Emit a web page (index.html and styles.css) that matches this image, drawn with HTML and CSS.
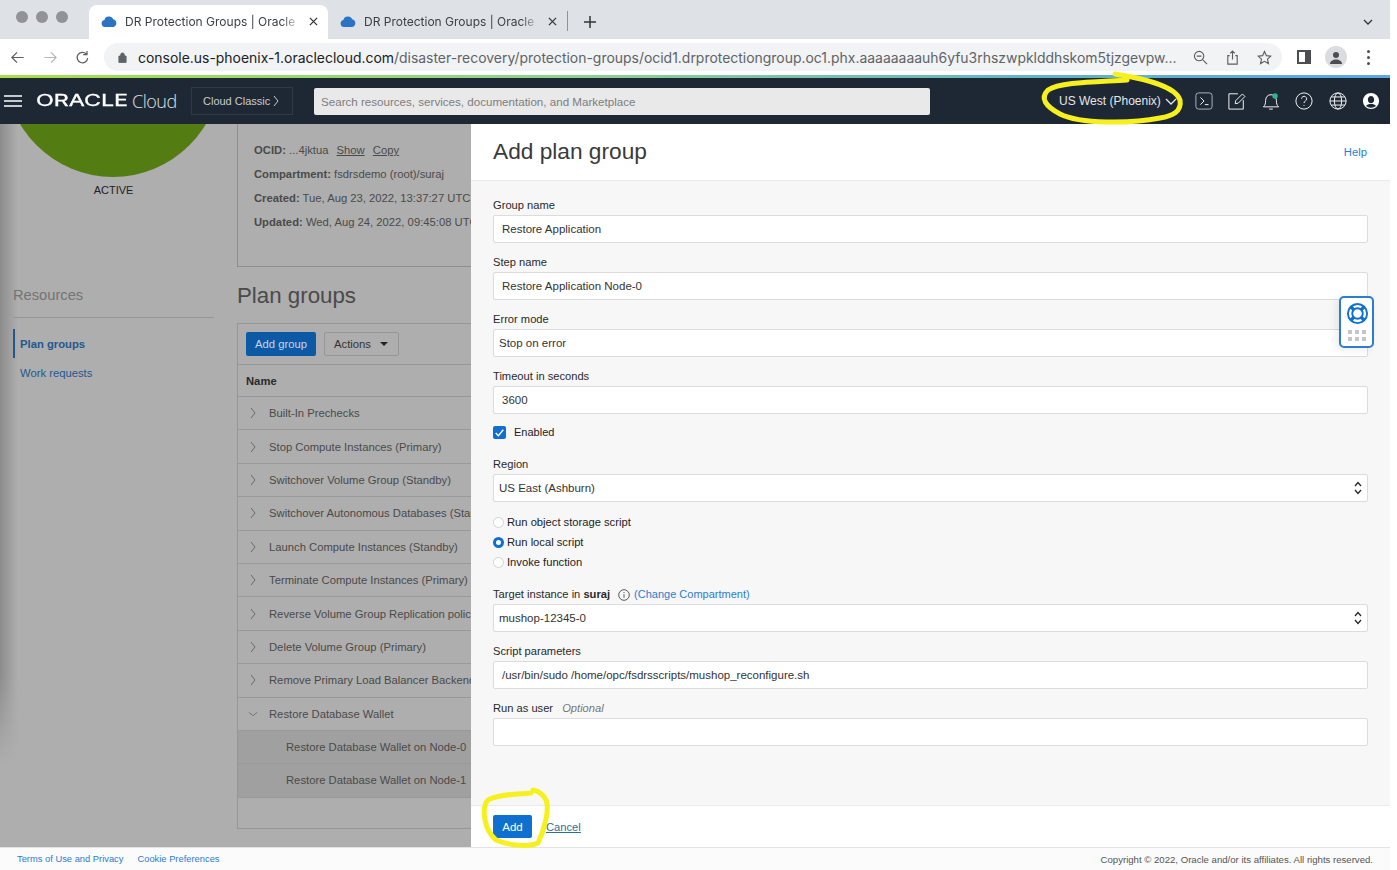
FILE: index.html
```html
<!DOCTYPE html>
<html lang="en">
<head>
    <meta charset="UTF-8">
    <title>DR Protection Groups | Oracle Cloud</title>
    <link rel="stylesheet" href="styles.css">
</head>
<body>
<div class="screen">
    <div class="tabstrip">
        <div class="lights"><i></i><i></i><i></i></div>
        <div class="tab tab_active">
            <svg class="cloud" viewBox="0 0 16 11"><path d="M4 11a3.6 3.6 0 0 1-.6-7.1A4.6 4.6 0 0 1 8.200 .5c1.800 0 3.300 1.100 3.900 2.700A4 4 0 0 1 12.300 11z"/></svg>
            <span class="tab_title">DR Protection Groups | Oracle Cloud</span>
            <svg class="tab_x" viewBox="0 0 10 10"><path d="M1 1l8 8M9 1l-8 8"/></svg>
        </div>
        <div class="tab">
            <svg class="cloud" viewBox="0 0 16 11"><path d="M4 11a3.6 3.6 0 0 1-.6-7.1A4.6 4.6 0 0 1 8.200 .5c1.800 0 3.300 1.100 3.900 2.700A4 4 0 0 1 12.300 11z"/></svg>
            <span class="tab_title">DR Protection Groups | Oracle Cloud</span>
            <svg class="tab_x" viewBox="0 0 10 10"><path d="M1 1l8 8M9 1l-8 8"/></svg>
        </div>
        <div class="tab_sep"></div>
        <svg class="tab_plus" viewBox="0 0 12 12"><path d="M6 0v12M0 6h12"/></svg>
        <svg class="tab_more" viewBox="0 0 10 6"><path d="M1 1l4 4 4-4"/></svg>
    </div>

    <div class="toolbar">
        <svg class="tool_icon" viewBox="0 0 16 16"><path d="M14.500 8H2M7.500 2.500L2 8l5.500 5.500"/></svg>
        <svg class="tool_icon tool_off" viewBox="0 0 16 16"><path d="M1.500 8H14M8.500 2.500L14 8l-5.500 5.500"/></svg>
        <svg class="tool_icon" viewBox="0 0 16 16"><path d="M13.500 8.500A5.600 5.600 0 1 1 12 4.200M12.800 1v4h-4"/></svg>
        <div class="omnibox">
            <svg class="lock" viewBox="0 0 10 12"><path d="M1 5h8v7H1zM3 5V3.500a2 2 0 0 1 4 0V5" /></svg>
            <span class="url"><b>console.us-phoenix-1.oraclecloud.com</b>/disaster-recovery/protection-groups/ocid1.drprotectiongroup.oc1.phx.aaaaaaaauh6yfu3rhszwpklddhskom5tjzgevpw...</span>
            <svg class="omni_icon" viewBox="0 0 16 16"><circle cx="6.500" cy="6.500" r="5"/><path d="M10.500 10.500L15 15M4 6.500h5"/></svg>
            <svg class="omni_icon" viewBox="0 0 16 16"><path d="M5 6H3v9h10V6h-2M8 10V1M5.500 3.500L8 1l2.500 2.500"/></svg>
            <svg class="omni_icon" viewBox="0 0 16 16"><path d="M8 1.500l2 4.500 4.800.5-3.600 3.200 1 4.800L8 12.100l-4.200 2.400 1-4.800L1.200 6.500 6 6z"/></svg>
        </div>
        <svg class="side_icon" viewBox="0 0 14 14"><path d="M0 0h14v14H0zM2 2v10h6V2z" fill-rule="evenodd"/></svg>
        <div class="avatar"><svg viewBox="0 0 14 14"><circle cx="7" cy="4" r="3"/><path d="M1 13c0-3 3-4.500 6-4.500s6 1.500 6 4.500z"/></svg></div>
        <div class="dots"><i></i><i></i><i></i></div>
    </div>
    <div class="brandline"></div>

    <nav class="topnav">
        <svg class="hamburger" viewBox="0 0 18 12"><path d="M0 1h18M0 6h18M0 11h18"/></svg>
        <span class="logo"><span class="logo_mark">ORACLE</span><span class="logo_cloud">Cloud</span></span>
        <div class="classic">Cloud Classic <svg viewBox="0 0 6 12"><path d="M1 1l4 5-4 5"/></svg></div>
        <div class="search">Search resources, services, documentation, and Marketplace</div>
        <div class="region">US West (Phoenix) <svg viewBox="0 0 12 7"><path d="M1 1l5 5 5-5"/></svg></div>
        <div class="nav_icons">
            <svg viewBox="0 0 20 20"><rect x="1" y="1" width="18" height="18" rx="3" stroke="#aab1b9"/><path d="M6 6l4 4-4 4M11 14h4"/></svg>
            <svg viewBox="0 0 20 20"><path d="M17 9v10H1V2h10M8 13l.6-3.400L16 2.200l2.800 2.800-7.400 7.400z"/></svg>
            <svg viewBox="0 0 20 20"><path d="M1.500 16.500c2-2 2.500-3.500 2.500-7 0-4 2.500-6.500 6-6.500s6 2.500 6 6.500c0 3.500.5 5 2.500 7zM8 19h4"/><circle cx="14.500" cy="4.500" r="3" class="bell_dot"/></svg>
            <svg viewBox="0 0 20 20"><circle cx="10" cy="10" r="9"/><path d="M7.300 7.500a2.800 2.800 0 1 1 4.200 2.500c-1 .6-1.500 1.100-1.500 2.300M10 14.500v1"/></svg>
            <svg viewBox="0 0 20 20"><circle cx="10" cy="10" r="9"/><ellipse cx="10" cy="10" rx="4" ry="9"/><path d="M1 10h18M2.300 5.500h15.400M2.300 14.500h15.400"/></svg>
            <svg class="nav_user" viewBox="0 0 20 20"><path fill-rule="evenodd" d="M10 1a9 9 0 1 0 0 18 9 9 0 0 0 0-18zm0 3.500c2 0 3.500 1.700 3.500 4s-1.500 4-3.500 4-3.500-1.700-3.500-4 1.500-4 3.500-4zM4.500 15.500c1-1.500 3-2.200 5.500-2.200s4.500.7 5.500 2.200A7.500 7.500 0 0 1 10 17.500a7.500 7.500 0 0 1-5.500-2z"/></svg>
        </div>
    </nav>

    <main class="workspace">
        <div class="page">
            <aside class="sidebar">
                <div class="status_circle"></div>
                <div class="status_label">ACTIVE</div>
                <h2 class="res_title">Resources</h2>
                <a class="res_link res_current">Plan groups</a>
                <a class="res_link">Work requests</a>
            </aside>
            <section class="content">
                <div class="info_box">
                    <p><b>OCID:</b> ...4jktua <u>Show</u> <u>Copy</u></p>
                    <p><b>Compartment:</b> fsdrsdemo (root)/suraj</p>
                    <p><b>Created:</b> Tue, Aug 23, 2022, 13:37:27 UTC</p>
                    <p><b>Updated:</b> Wed, Aug 24, 2022, 09:45:08 UTC</p>
                </div>
                <h1 class="content_title">Plan groups</h1>
                <div class="table_box">
                    <div class="table_bar">
                        <span class="btn_primary">Add group</span>
                        <span class="btn_actions">Actions <i></i></span>
                    </div>
                    <div class="table_head">Name</div>
                    <div class="row"><svg viewBox="0 0 6 12"><path d="M1 1l4 5-4 5"/></svg>Built-In Prechecks</div>
                    <div class="row"><svg viewBox="0 0 6 12"><path d="M1 1l4 5-4 5"/></svg>Stop Compute Instances (Primary)</div>
                    <div class="row"><svg viewBox="0 0 6 12"><path d="M1 1l4 5-4 5"/></svg>Switchover Volume Group (Standby)</div>
                    <div class="row"><svg viewBox="0 0 6 12"><path d="M1 1l4 5-4 5"/></svg>Switchover Autonomous Databases (Standby)</div>
                    <div class="row"><svg viewBox="0 0 6 12"><path d="M1 1l4 5-4 5"/></svg>Launch Compute Instances (Standby)</div>
                    <div class="row"><svg viewBox="0 0 6 12"><path d="M1 1l4 5-4 5"/></svg>Terminate Compute Instances (Primary)</div>
                    <div class="row"><svg viewBox="0 0 6 12"><path d="M1 1l4 5-4 5"/></svg>Reverse Volume Group Replication policy</div>
                    <div class="row"><svg viewBox="0 0 6 12"><path d="M1 1l4 5-4 5"/></svg>Delete Volume Group (Primary)</div>
                    <div class="row"><svg viewBox="0 0 6 12"><path d="M1 1l4 5-4 5"/></svg>Remove Primary Load Balancer Backend</div>
                    <div class="row"><svg class="row_open" viewBox="0 0 12 6"><path d="M1 1l5 4 5-4"/></svg>Restore Database Wallet</div>
                    <div class="row row_sub">Restore Database Wallet on Node-0</div>
                    <div class="row row_sub">Restore Database Wallet on Node-1</div>
                </div>
            </section>
        </div>

        <section class="panel">
            <header class="panel_head">
                <h1>Add plan group</h1>
                <a class="link">Help</a>
            </header>
            <div class="panel_body">
                <div class="field"><label>Group name</label><div class="input">Restore Application</div></div>
                <div class="field"><label>Step name</label><div class="input">Restore Application Node-0</div></div>
                <div class="field"><label>Error mode</label><div class="input select">Stop on error</div></div>
                <div class="field field_tight"><label>Timeout in seconds</label><div class="input">3600</div></div>
                <div class="check_row">
                    <span class="checkbox"><svg viewBox="0 0 12 12"><path d="M2.500 6.500l2.500 2.500 4.500-5.500"/></svg></span>
                    Enabled
                </div>
                <div class="field field_tight"><label>Region</label>
                    <div class="input select">US East (Ashburn)
                        <svg class="updown" viewBox="0 0 8 14"><path d="M1 5l3-3.500L7 5M1 9l3 3.500L7 9"/></svg>
                    </div>
                </div>
                <div class="radios">
                    <div class="radio_row"><span class="radio"></span>Run object storage script</div>
                    <div class="radio_row"><span class="radio radio_on"></span>Run local script</div>
                    <div class="radio_row"><span class="radio"></span>Invoke function</div>
                </div>
                <div class="field"><label><span>Target instance in <b>suraj</b></span>
                    <svg class="info" viewBox="0 0 12 12"><circle cx="6" cy="6" r="5.300"/><path d="M6 5.200v3.600M6 3v1"/></svg>
                    <a class="link">(Change Compartment)</a></label>
                    <div class="input select">mushop-12345-0
                        <svg class="updown" viewBox="0 0 8 14"><path d="M1 5l3-3.500L7 5M1 9l3 3.500L7 9"/></svg>
                    </div>
                </div>
                <div class="field"><label>Script parameters</label><div class="input">/usr/bin/sudo /home/opc/fsdrsscripts/mushop_reconfigure.sh</div></div>
                <div class="field"><label>Run as user <em>Optional</em></label><div class="input"></div></div>
            </div>
            <footer class="panel_foot">
                <span class="btn_add">Add</span>
                <a class="cancel">Cancel</a>
            </footer>
        </section>
    </main>

    <footer class="legal">
        <a>Terms of Use and Privacy</a>
        <a>Cookie Preferences</a>
        <span class="copyright">Copyright © 2022, Oracle and/or its affiliates. All rights reserved.</span>
    </footer>

    <div class="support">
        <svg viewBox="0 0 24 24"><circle cx="12" cy="12" r="10"/><circle cx="12" cy="12" r="5.500"/><path class="support_bands" d="M5 5l3.500 3.500M19 5l-3.500 3.500M5 19l3.500-3.500M19 19l-3.500-3.500"/></svg>
        <div class="support_grip"><i></i><i></i><i></i><i></i><i></i><i></i></div>
    </div>

    <svg class="scribble" viewBox="0 0 1397 870">
        <path d="M1115 74C1140 78 1175 85 1180 100C1182 112 1172 116 1160 118C1130 124 1080 124 1060 114C1045 106 1040 98 1048 90C1060 82 1095 82 1127 80"/>
        <path d="M531 793C515 794 495 795 488 800C481 808 484 830 496 840C510 846 530 847 538 843C544 830 550 810 546 800C543 794 538 791 533 790"/>
    </svg>
</div>
</body>
</html>
```

FILE: styles.css
```css
* {
    box-sizing: border-box;
}

html, body {
    margin: 0;
    height: 100%;
    background-color: white;
    overflow: hidden;
}

body {
    font-family: "Liberation Sans", Arial, sans-serif;
    font-size: 11.5px;
    color: #222;
}

svg {
    display: block;
    fill: none;
    stroke: currentColor;
}

.screen {
    position: relative;
    width: 1390px;
    height: 870px;
    display: flex;
    flex-direction: column;
}

/* browser chrome */
.tabstrip {
    height: 39px;
    flex: none;
    display: flex;
    align-items: flex-end;
    background-color: #dee1e6;
}

.lights {
    width: 89px;
    height: 39px;
    padding: 11px 0 0 16px;
    display: flex;
    gap: 8px;
}

.lights i {
    width: 12px;
    height: 12px;
    border-radius: 50%;
    background-color: #929396;
}

.tab {
    width: 239px;
    height: 34px;
    padding: 0 10px 2px 12px;
    display: flex;
    align-items: center;
    border-radius: 8px 8px 0 0;
    font-family: Inter, sans-serif;
    font-size: 12px;
    color: #3c4043;
}

.tab_active {
    background-color: white;
}

.cloud {
    width: 16px;
    height: 11px;
    flex: none;
    fill: #2b74c4;
    stroke: none;
}

.tab_title {
    width: 175px;
    margin-left: 8px;
    flex: none;
    white-space: nowrap;
    overflow: hidden;
    -webkit-mask-image: linear-gradient(90deg, black 90%, transparent);
    mask-image: linear-gradient(90deg, black 90%, transparent);
}

.tab_x {
    width: 9px;
    height: 9px;
    margin-left: 9px;
    flex: none;
    stroke: #333;
    stroke-width: 1.400;
}

.tab_sep {
    width: 1px;
    height: 20px;
    margin: 0 0 8px 0;
    background-color: #8f9296;
}

.tab_plus {
    width: 12px;
    height: 12px;
    margin: 0 0 11px 16px;
    stroke: #333;
    stroke-width: 1.500;
}

.tab_more {
    width: 10px;
    height: 6px;
    margin: 0 17px 14px auto;
    stroke: #333;
    stroke-width: 1.300;
}

.toolbar {
    height: 36px;
    flex: none;
    display: flex;
    align-items: center;
    padding-left: 10px;
    background-color: white;
}

.tool_icon {
    width: 15px;
    height: 15px;
    margin-right: 18px;
    stroke: #5a5d61;
    stroke-width: 1.300;
}

.tool_icon:nth-child(3) {
    margin-left: -1px;
}

.tool_off {
    stroke: #b5b8bc;
}

.omnibox {
    width: 1178px;
    height: 28px;
    margin-left: -4px;
    padding-left: 14px;
    display: flex;
    align-items: center;
    border-radius: 14px;
    background-color: #f1f3f4;
}

.lock {
    width: 9px;
    height: 12px;
    margin-right: 11px;
    flex: none;
    fill: #5f6368;
    stroke: #5f6368;
}

.url {
    width: 1054px;
    flex: none;
    font-family: Inter, sans-serif;
    font-size: 13.950px;
    white-space: nowrap;
    overflow: hidden;
    color: #5f6368;
}

.url b {
    font-weight: 400;
    color: #202124;
}

.omni_icon {
    width: 15px;
    height: 15px;
    margin-left: 1px;
    margin-right: 16px;
    flex: none;
    stroke: #5a5d61;
    stroke-width: 1.200;
}

.side_icon {
    width: 14px;
    height: 14px;
    margin-left: 15px;
    fill: #4a4d52;
    stroke: none;
}

.avatar {
    width: 22px;
    height: 22px;
    margin-left: 14px;
    padding: 5px 4px 3px 4px;
    border-radius: 50%;
    background-color: #dadce0;
}

.avatar svg {
    fill: #4a4d52;
    stroke: none;
}

.dots {
    margin-left: 19.500px;
    display: flex;
    flex-direction: column;
    gap: 3px;
}

.dots i {
    width: 3px;
    height: 3px;
    border-radius: 50%;
    background-color: #4a4d52;
}

.brandline {
    height: 3px;
    flex: none;
    background: linear-gradient(90deg, #a8dc4a, #8fd18f 40%, #62b3c8 75%, #5ea6e6);
}

/* oracle nav */
.topnav {
    height: 46px;
    flex: none;
    display: flex;
    align-items: center;
    padding-left: 4px;
    background-color: #1e2835;
    color: #d6d9dc;
}

.hamburger {
    width: 18px;
    height: 12px;
    flex: none;
    stroke: white;
    stroke-width: 1.600;
}

.logo {
    width: 155px;
    margin-left: 14px;
    display: flex;
    align-items: center;
    color: white;
}

.logo_mark {
    width: 92px;
    font-family: Inter, sans-serif;
    font-size: 15.500px;
    font-weight: 400;
    line-height: 16px;
    -webkit-text-stroke: .3px white;
    transform: scaleX(1.500);
    transform-origin: left center;
}

.logo_cloud {
    margin-left: 4px;
    font-family: "Open Sans", sans-serif;
    font-size: 18px;
    font-weight: 300;
    letter-spacing: -0.500px;
    color: #dfe2e5;
}

.classic {
    width: 102px;
    height: 28px;
    flex: none;
    display: flex;
    align-items: center;
    gap: 3px;
    padding-left: 11px;
    border: 1px solid #2e3a49;
    font-size: 11px;
    color: #c8ccd0;
}

.classic svg {
    width: 6px;
    height: 12px;
}

.search {
    width: 616px;
    height: 27px;
    margin-left: 21px;
    padding-left: 7px;
    flex: none;
    display: flex;
    align-items: center;
    border-radius: 2px;
    background-color: #e9e9e9;
    color: #7d7d7d;
    font-size: 11.600px;
}

.region {
    margin-left: 129px;
    display: flex;
    align-items: center;
    gap: 4px;
    font-size: 12px;
    color: #e4e6e8;
    white-space: nowrap;
}

.region svg {
    width: 12px;
    height: 7px;
    stroke-width: 1.300;
}

.nav_icons {
    margin-left: 18px;
    display: flex;
    gap: 15.500px;
}

.nav_icons svg {
    width: 18px;
    height: 18px;
    stroke: #f0f1f3;
    stroke-width: 1.100;
}

.nav_icons .bell_dot {
    fill: #2fb58e;
    stroke: none;
}

.nav_icons .nav_user {
    fill: white;
    stroke: none;
}

/* dimmed console page */
.workspace {
    flex: 1;
    min-height: 0;
    display: flex;
}

.page {
    position: relative;
    width: 471px;
    flex: none;
    display: flex;
    padding-left: 13px;
    overflow: hidden;
    font-size: 11.250px;
    color: #4a4a4a;
    background-color: #aeaeae;
}

/* panel shadow that wraps round the left edge */
.page::before {
    content: "";
    position: absolute;
    left: 0;
    top: 0;
    width: 18px;
    height: 640px;
    background: linear-gradient(90deg, #8c8c8c, #aeaeae);
    -webkit-mask-image: linear-gradient(180deg, black 86%, transparent);
    mask-image: linear-gradient(180deg, black 86%, transparent);
}

.sidebar {
    position: relative;
    width: 201px;
    flex: none;
    display: flex;
    flex-direction: column;
    align-items: stretch;
}

.status_circle {
    width: 216px;
    height: 216px;
    margin: -163px 0 0 -8px;
    flex: none;
    border-radius: 50%;
    background-color: #537d12;
}

.status_label {
    margin-top: 6px;
    text-align: center;
    font-size: 11px;
    line-height: 15px;
    color: #222;
}

.res_title {
    margin: 89px 0 0 0;
    padding-bottom: 13px;
    border-bottom: 1px solid #969696;
    font-size: 14.700px;
    font-weight: 400;
    line-height: 17px;
    color: #747474;
}

.res_link {
    height: 29px;
    margin-top: 11px;
    padding-left: 5px;
    display: flex;
    align-items: center;
    border-left: 2px solid transparent;
    color: #23588f;
}

.res_current {
    border-left-color: #23588f;
    font-weight: 700;
}

.res_link + .res_link {
    margin-top: 0;
}

.content {
    position: relative;
    width: 300px;
    margin-left: 23px;
    flex: none;
}

.info_box {
    height: 143px;
    padding: 19px 0 0 16px;
    border-left: 1px solid #8e8e8e;
    border-bottom: 1px solid #8e8e8e;
    white-space: nowrap;
    overflow: hidden;
}

.info_box p {
    margin: 0 0 10px 0;
    line-height: 14px;
}

.info_box u {
    margin-left: 5px;
}

.content_title {
    margin: 16px 0 14px 0;
    font-size: 22.300px;
    font-weight: 400;
    line-height: 26px;
    color: #4a4a4a;
}

.table_box {
    height: 506px;
    border: 1px solid #969696;
    border-right: 0;
    white-space: nowrap;
    overflow: hidden;
}

.table_bar {
    height: 41px;
    padding-left: 8px;
    display: flex;
    align-items: center;
    gap: 8px;
    border-bottom: 1px solid #969696;
}

.btn_primary {
    width: 70px;
    height: 24px;
    display: flex;
    align-items: center;
    justify-content: center;
    border-radius: 2px;
    background-color: #0c5aa6;
    color: #c6d5e5;
}

.btn_actions {
    width: 75px;
    height: 24px;
    padding-left: 9px;
    display: flex;
    align-items: center;
    gap: 9px;
    border: 1px solid #969696;
    border-radius: 2px;
    color: #333;
}

.btn_actions i {
    border: 4px solid transparent;
    border-top-color: #222;
    border-bottom: 0;
}

.table_head {
    height: 32px;
    padding-left: 8px;
    display: flex;
    align-items: center;
    border-bottom: 1px solid #969696;
    font-weight: 700;
    color: #2a2a2a;
}

.row {
    height: 33.400px;
    padding-left: 12px;
    display: flex;
    align-items: center;
    border-bottom: 1px solid #999;
    color: #4a4a4a;
}

.row svg {
    width: 6px;
    height: 12px;
    margin-right: 13px;
    flex: none;
    stroke: #6a6a6a;
}

.row svg.row_open {
    width: 10px;
    height: 6px;
    margin-left: -2px;
    margin-right: 11px;
}

.row_sub {
    padding-left: 48px;
    background-color: #a0a0a0;
}

/* side panel */
.panel {
    flex: 1;
    min-width: 0;
    display: flex;
    flex-direction: column;
    background-color: #f7f7f7;
}

.panel_head {
    height: 57px;
    flex: none;
    padding: 0 23px 0 22px;
    display: flex;
    align-items: center;
    justify-content: space-between;
    border-bottom: 1px solid #eaeaea;
    background-color: white;
}

.panel_head h1 {
    margin: 0 0 1px 0;
    font-size: 22.700px;
    font-weight: 400;
    color: #3a3a3a;
}

.panel_head .link {
    font-size: 11.250px;
}

.link {
    color: #2c7cd0;
}

.panel_body {
    flex: 1;
    padding: 17px 22px 0 22px;
}

.field {
    margin-bottom: 12px;
}

.field label {
    height: 15px;
    margin-bottom: 2px;
    display: flex;
    align-items: center;
    gap: 3px;
    font-size: 11.150px;
    line-height: 15px;
    color: #2a2a2a;
    white-space: pre-wrap;
}

.field label .link {
    font-size: 11px;
}

.field em {
    margin-left: 3px;
    color: #777;
}

.input {
    height: 28px;
    padding-left: 8px;
    display: flex;
    align-items: center;
    justify-content: space-between;
    border: 1px solid #dcdcdc;
    border-radius: 2px;
    background-color: white;
    color: #333;
}

.select {
    padding-left: 5px;
    padding-right: 5px;
}

.updown {
    width: 8px;
    height: 14px;
    stroke: #222;
    stroke-width: 1.200;
}

.field_tight {
    margin-bottom: 11px;
}

.check_row {
    height: 14px;
    margin-bottom: 18px;
    display: flex;
    align-items: center;
    gap: 8px;
    font-size: 11px;
}

.checkbox {
    width: 13px;
    height: 13px;
    border-radius: 2px;
    background-color: #0f70d0;
}

.checkbox svg {
    stroke: white;
    stroke-width: 1.300;
}

.radios {
    margin: -1px 0 15px 0;
    font-size: 11.200px;
}

.radio_row {
    height: 20px;
    display: flex;
    align-items: center;
    gap: 3px;
}

.radio {
    width: 11px;
    height: 11px;
    border: 1px solid #d4d4d4;
    border-radius: 50%;
    background-color: white;
}

.radio_on {
    border: 3.500px solid #0f70d0;
}

.info {
    width: 12px;
    height: 12px;
    margin: 0 1px 0 5px;
    stroke: #333;
    stroke-width: .8;
}

.panel_foot {
    height: 42px;
    flex: none;
    padding: 0 22px;
    display: flex;
    align-items: center;
    gap: 14px;
    border-top: 1px solid #ebebeb;
    background-color: white;
}

.btn_add {
    width: 39px;
    height: 23px;
    display: flex;
    align-items: center;
    justify-content: center;
    border-radius: 2px;
    background-color: #0f70d0;
    color: white;
}

.cancel {
    font-size: 11.200px;
    color: #2a6f98;
    text-decoration: underline;
}

.legal {
    height: 23px;
    flex: none;
    padding: 0 17px;
    display: flex;
    align-items: center;
    gap: 14px;
    border-top: 1px solid #e3e3e3;
    background-color: #fbfbfb;
    font-size: 9.350px;
    color: #2c7cd0;
}

.copyright {
    margin-left: auto;
    font-size: 9.600px;
    color: #555;
}

/* floating help widget */
.support {
    position: absolute;
    left: 1339px;
    top: 296px;
    width: 35px;
    height: 52px;
    padding: 4px 4.500px 0 4.500px;
    border: 2px solid #2c7cd0;
    border-radius: 5px;
    background-color: white;
    box-shadow: -3px 2px 8px rgba(0, 0, 0, .08);
}

.support svg {
    width: 23px;
    height: 23px;
    stroke: #0f70d0;
    stroke-width: 2;
}

.support .support_bands {
    stroke-width: 3.500;
}

.support_grip {
    margin: 5px 0 0 2px;
    display: grid;
    grid-template-columns: repeat(3, 4px);
    gap: 3px;
}

.support_grip i {
    height: 4px;
    background-color: #c3c7cc;
}

/* marker scribbles on top of the shot */
.scribble {
    position: absolute;
    left: 0;
    top: 0;
    width: 1397px;
    height: 870px;
    pointer-events: none;
    stroke: #f6f11e;
    stroke-width: 5;
    stroke-linecap: round;
}
```
